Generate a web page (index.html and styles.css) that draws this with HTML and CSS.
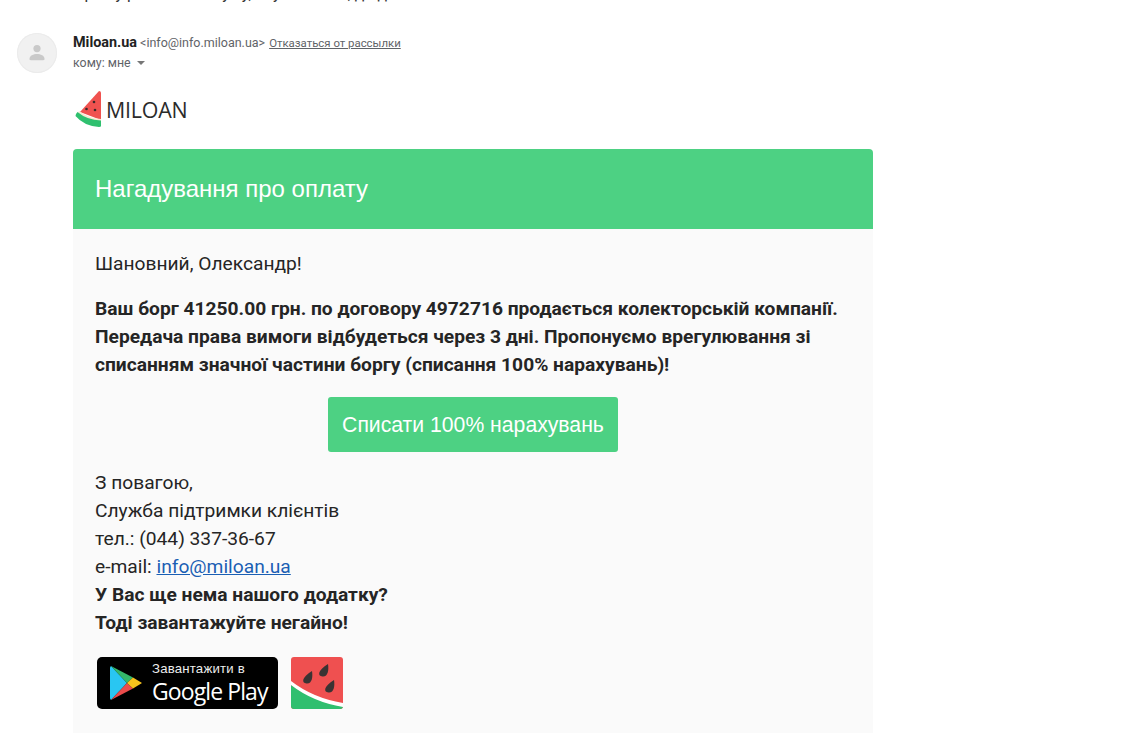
FILE: index.html
```html
<!DOCTYPE html>
<html lang="uk">
<head>
<meta charset="utf-8">
<title>Miloan</title>
<link rel="stylesheet" href="styles.css">
</head>
<body>
<div class="cut-line"><div class="cut-text">Прошу р оплатити суму, яку ви винні, до дня сплати</div></div>
<div class="message">
  <div class="avatar">
    <svg width="20" height="20" viewBox="0 0 20 20"><circle cx="10" cy="5.6" r="3.6" fill="#c9c9c9"/><path d="M2.5 16c0-3.6 4-5 7.5-5s7.5 1.4 7.5 5c0 .8-.5 1.2-1.2 1.2H3.7c-.7 0-1.2-.4-1.2-1.2z" fill="#c9c9c9"/></svg>
  </div>
  <div class="content">
    <div class="sender"><b class="name">Miloan.ua</b> <span class="addr">&lt;info@info.miloan.ua&gt;</span> <a class="unsub">Отказаться от рассылки</a></div>
    <div class="recipient">кому: мне <span class="caret"></span></div>
    <div class="logo">
      <svg width="28" height="37" viewBox="0 0 28 37">
        <path d="M25 1 Q27 1 27 3 L27 30 L6 22 Z" fill="#f0524f"/>
        <path d="M5 21 Q14 28 27 29 L27 31 Q13 30 4 23 Z" fill="#f7e9d0"/>
        <path d="M3.5 22 Q13 30 27 30.5 L27 36 Q27 37 25 37 Q10 36 1.5 26 Q1.5 24 3.5 22 Z" fill="#2fc06f"/>
        <circle cx="20" cy="12" r="1.3" fill="#3a2a2a"/><circle cx="12.5" cy="19" r="1.3" fill="#3a2a2a"/><circle cx="21" cy="20" r="1.3" fill="#3a2a2a"/>
      </svg>
      <span class="logo-text">MILOAN</span>
    </div>
    <div class="card">
      <div class="card-head">Нагадування про оплату</div>
      <div class="card-body">
        <p class="greet">Шановний, Олександр!</p>
        <p class="strong">Ваш борг 41250.00 грн. по договору 4972716 продається колекторській компанії. Передача права вимоги відбудеться через 3 дні. Пропонуємо врегулювання зі списанням значної частини боргу (списання 100% нарахувань)!</p>
        <div class="cta-row"><a class="cta">Списати 100% нарахувань</a></div>
        <p class="sign">З повагою,<br>Служба підтримки клієнтів<br>тел.: (044) 337-36-67<br>e-mail: <a class="mail">info@miloan.ua</a><br><b>У Вас ще нема нашого додатку?<br>Тоді завантажуйте негайно!</b></p>
        <div class="apps">
          <div class="gplay">
            <svg width="34" height="36" viewBox="0 0 34 36">
              <path d="M2 1 L18 18 L2 35 Q1 34 1 33 V3 Q1 2 2 1 Z" fill="#29c6f2"/>
              <path d="M2 1 L24 12.5 L18 18 Z" fill="#34b86a"/>
              <path d="M2 35 L24 23.5 L18 18 Z" fill="#ea4b4b"/>
              <path d="M24 12.5 L33 18 L24 23.5 L18 18 Z" fill="#f8c21c"/>
            </svg>
            <div class="gplay-text"><span class="gp-small">Завантажити в</span><span class="gp-big">Google Play</span></div>
          </div>
          <svg class="app-icon" width="52" height="52" viewBox="0 0 52 52">
            <rect width="52" height="52" rx="3" fill="#ef5050"/>
            <path d="M0 28 Q22 44 52 49 V49 a3 3 0 0 1-3 3 H3 a3 3 0 0 1-3-3 Z" fill="#30bf6f"/>
            <path d="M0 24 Q22 41 52 46 V50 Q22 45 0 28 Z" fill="#fff"/>
            <path d="M21 14 C22 20 21 27 15.5 26.5 C10 26 11 20 21 14 Z" fill="#3a3333"/>
            <path d="M37 7 C38 13 37 20 31.5 19.5 C26 19 27 13 37 7 Z M43 23 C44 29 43 36 37.5 35.5 C32 35 33 29 43 23 Z" fill="#3a3333"/>
          </svg>
        </div>
      </div>
    </div>
  </div>
</div>
</body>
</html>
```
FILE: styles.css
```css
html, body { margin: 0; padding: 0; height: 733px; overflow: hidden; background: #fff; }
body { font-family: Roboto, "Noto Sans", sans-serif; color: #252525; }
.cut-line { height: 3px; overflow: hidden; padding-left: 73px; }
.cut-text { font-size: 16px; line-height: 18px; margin-top: -15px; color: #333; white-space: nowrap; }
.message { display: flex; padding: 30px 0 0 17px; }
.avatar { width: 40px; height: 40px; border-radius: 50%; background: #f1f1f1; display: flex; align-items: center; justify-content: center; flex: none; box-shadow: inset 0 0 0 1px #ebebeb; }
.content { margin-left: 16px; width: 800px; }
.sender { font-size: 12px; line-height: 18px; white-space: nowrap; margin-top: 1px; }
.name { font-size: 14.4px; color: #222; }
.addr { font-size: 12.5px; color: #5f6368; }
.unsub { font-size: 11.4px; color: #5f6368; text-decoration: underline; margin-left: 1px; }
.recipient { font-size: 12.4px; line-height: 18px; color: #5f6368; margin-top: 2px; display: flex; align-items: center; gap: 5px; }
.caret { display: inline-block; width: 0; height: 0; border: 4px solid transparent; border-top-color: #777; border-bottom: 0; margin-left: 1px; }
.logo { display: flex; align-items: center; height: 37px; margin-top: 18px; margin-left: 1px; }
.logo-text { font-family: "Open Sans", sans-serif; font-size: 21.4px; color: #2b2b2b; margin-left: 4px; margin-top: 2px; letter-spacing: -0.2px; }
.card { margin-top: 22px; }
.card-head { height: 80px; background: #4dd183; border-radius: 4px 4px 0 0; color: #fff; font-family: "Liberation Sans", Arial, sans-serif; font-size: 24px; line-height: 80px; padding-left: 22px; }
.card-body { background: #fafafa; padding: 21px 22px 0; font-size: 19.2px; line-height: 28px; height: 600px; }
.card-body p { margin: 0; }
.greet { margin-bottom: 17px !important; }
.strong { font-weight: 700; }
.cta-row { display: flex; justify-content: center; margin: 18px 0 17px; }
.cta { display: block; width: 290px; height: 55px; line-height: 55px; text-align: center; background: #4dd183; color: #fff; border-radius: 3px; font-family: "Liberation Sans", Arial, sans-serif; font-size: 21.2px; }
.sign b { font-weight: 700; }
.mail { color: #1a5fb4; text-decoration: underline; }
.apps { display: flex; align-items: center; margin-top: 20px; margin-left: 2px; gap: 13px; }
.gplay { width: 181px; height: 52px; background: #000; border-radius: 5px; display: flex; align-items: center; padding-left: 12px; box-sizing: border-box; color: #fff; }
.gplay-text { display: flex; flex-direction: column; align-items: flex-start; margin-left: 9px; }
.gp-small { font-family: "Liberation Sans", Arial, sans-serif; font-size: 13.2px; line-height: 14px; color: #eee; letter-spacing: 0.2px; }
.gp-big { font-family: "Open Sans", sans-serif; font-weight: 500; font-size: 23px; line-height: 27px; letter-spacing: -0.9px; margin-top: 2px; }
```
